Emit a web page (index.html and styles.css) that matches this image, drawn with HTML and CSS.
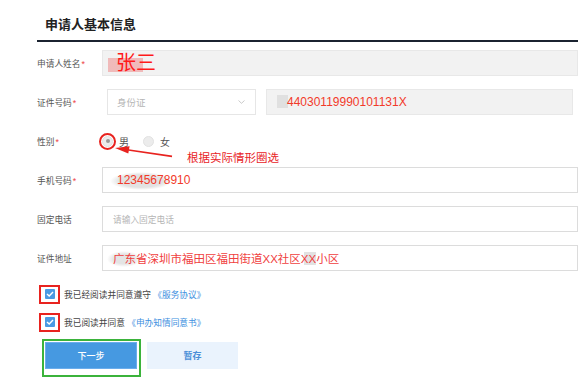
FILE: index.html
```html
<!DOCTYPE html>
<html lang="zh-CN">
<head>
<meta charset="utf-8">
<title>申请人基本信息</title>
<link rel="stylesheet" href="styles.css">
</head>
<body>
<div class="page">
  <div class="title-bar"><h2 class="title">申请人基本信息</h2></div>

  <div class="form">
    <div class="row">
      <div class="label">申请人姓名<span class="req">*</span></div>
      <div class="field field-gray field-name"><span class="v-name">张三</span></div>
    </div>

    <div class="row">
      <div class="label">证件号码<span class="req">*</span></div>
      <div class="select">
        <span class="placeholder">身份证</span>
        <svg class="chev" width="7" height="4" viewBox="0 0 7 4"><path d="M0.5 0.5 L3.5 3.3 L6.5 0.5" fill="none" stroke="#c4c4c4" stroke-width="0.9"/></svg>
      </div>
      <div class="field field-gray field-id"><span class="v-id">44030119990101131X</span></div>
    </div>

    <div class="row">
      <div class="label">性别<span class="req">*</span></div>
      <div class="radios">
        <span class="radio radio-on"><span class="ring"></span></span>
        <span class="radio-text">男</span>
        <span class="radio"></span>
        <span class="radio-text">女</span>
      </div>
    </div>

    <div class="row">
      <div class="label">手机号码<span class="req">*</span></div>
      <div class="field field-phone"><span class="v-phone">12345678910</span></div>
    </div>

    <div class="row">
      <div class="label">固定电话</div>
      <div class="field field-tel"><span class="placeholder">请输入固定电话</span></div>
    </div>

    <div class="row">
      <div class="label">证件地址</div>
      <div class="field field-addr"><span class="v-addr">广东省深圳市福田区福田街道XX社区XX小区</span></div>
    </div>
  </div>

  <div class="agree">
    <div class="agree-row">
      <span class="mark-red"><span class="checkbox"><svg width="8" height="6" viewBox="0 0 8 6"><path d="M1 3 L3.2 5 L7 1" fill="none" stroke="#fff" stroke-width="1.4"/></svg></span></span>
      <span class="agree-text">我已经阅读并同意遵守 <span class="link">《服务协议》</span></span>
    </div>
    <div class="agree-row">
      <span class="mark-red"><span class="checkbox"><svg width="8" height="6" viewBox="0 0 8 6"><path d="M1 3 L3.2 5 L7 1" fill="none" stroke="#fff" stroke-width="1.4"/></svg></span></span>
      <span class="agree-text">我已阅读并同意 <span class="link">《申办知情同意书》</span></span>
    </div>
  </div>

  <div class="actions">
    <div class="mark-green"><button class="btn btn-primary">下一步</button></div>
    <button class="btn btn-light">暂存</button>
  </div>

  <svg class="arrow" width="64" height="16" viewBox="0 0 64 16">
    <polygon points="3,5 17.6,3.3 16.3,10.6" fill="#e8231f"/>
    <line x1="16.5" y1="7" x2="60" y2="13.4" stroke="#e8231f" stroke-width="1.7"/>
  </svg>
  <div class="note">根据实际情形圈选</div>
</div>
</body>
</html>
```

FILE: styles.css
```css
html, body {
  margin: 0;
  padding: 0;
  background: #fff;
}

body {
  font-family: "Liberation Sans", "Noto Sans CJK SC", sans-serif;
  color: #555;
}

.page {
  position: relative;
  width: 541px;
  padding-left: 37px;
}

.title-bar {
  padding: 16px 0 6px 8px;
  border-bottom: 2px solid #1b2330;
}

.title {
  margin: 0;
  font-size: 13px;
  line-height: 18px;
  font-weight: bold;
  color: #222;
}

.form {
  margin-top: 8px;
  display: flex;
  flex-direction: column;
  gap: 13px;
}

.row {
  display: flex;
  align-items: center;
  height: 26px;
}

.label {
  width: 65px;
  flex: none;
  font-size: 8.7px;
  color: #555;
}

.req {
  color: #e44;
  margin-left: 1px;
}

.field {
  box-sizing: border-box;
  height: 26px;
  display: flex;
  align-items: center;
  border: 1px solid #dcdcdc;
  background: #fff;
  flex: 1;
}

.field-gray {
  background-color: #f2f2f2;
  border-color: #e8e8e8;
}

.field-name {
  padding-left: 13px;
  background-image: linear-gradient(rgba(238, 130, 130, 0.5), rgba(238, 130, 130, 0.5));
  background-repeat: no-repeat;
  background-position: 5px 7px;
  background-size: 35px 14px;
}

.v-name {
  font-size: 20px;
  line-height: 22px;
  color: #ff1a1a;
}

.select {
  box-sizing: border-box;
  margin-left: 5px;
  width: 149px;
  height: 26px;
  border: 1px solid #e6e6e6;
  display: flex;
  align-items: center;
  justify-content: space-between;
  padding: 0 10px 0 9px;
  flex: none;
}

.placeholder {
  font-size: 8.7px;
  color: #b5b5b5;
}

.select .placeholder {
  font-size: 9.5px;
}

.field-id {
  flex: none;
  width: 307px;
  margin-left: 10px;
  padding-left: 20px;
  background-image: linear-gradient(#e0e0e0, #e0e0e0);
  background-repeat: no-repeat;
  background-position: 10px 5px;
  background-size: 11px 13px;
}

.v-id {
  font-size: 12px;
  color: #f23a2a;
}

.radios {
  display: flex;
  align-items: center;
}

.radio {
  position: relative;
  box-sizing: border-box;
  width: 11px;
  height: 11px;
  border-radius: 50%;
  background: #ececec;
  border: 1px solid #e2e2e2;
  flex: none;
}

.radio-on::after {
  content: "";
  position: absolute;
  left: 2.5px;
  top: 2.5px;
  width: 4px;
  height: 4px;
  border-radius: 50%;
  background: #9a9a9a;
}

.ring {
  position: absolute;
  left: -4px;
  top: -4px;
  width: 17px;
  height: 17px;
  box-sizing: border-box;
  border: 2px solid #e8231f;
  border-radius: 50%;
}

.radio-text {
  font-size: 10px;
  color: #555;
  margin-left: 6px;
  margin-right: 14px;
}

.field-phone {
  padding-left: 14px;
  background-image: radial-gradient(closest-side, #e2e2e2 70%, rgba(226, 226, 226, 0));
  background-repeat: no-repeat;
  background-position: 7px 4px;
  background-size: 62px 18px;
}

.v-phone {
  font-size: 12px;
  color: #f23a2a;
}

.field-tel {
  padding-left: 10px;
}

.field-addr {
  padding-left: 10px;
  background-image:
    radial-gradient(closest-side, #e4e4e4 60%, rgba(228, 228, 228, 0)),
    linear-gradient(#e2e2e2, #e2e2e2);
  background-repeat: no-repeat;
  background-position: 4px 5px, 201px 6px;
  background-size: 34px 16px, 12px 13px;
}

.v-addr {
  font-size: 11.5px;
  color: #f04040;
}

.agree {
  margin-top: 13px;
  display: flex;
  flex-direction: column;
  gap: 8px;
}

.agree-row {
  display: flex;
  align-items: center;
  height: 20px;
  margin-left: 2px;
}

.mark-red {
  box-sizing: border-box;
  width: 21px;
  height: 19px;
  border: 2px solid #e8231f;
  display: flex;
  align-items: center;
  justify-content: center;
  flex: none;
}

.checkbox {
  width: 10px;
  height: 10px;
  border-radius: 1px;
  background: #4a9be3;
  display: flex;
  align-items: center;
  justify-content: center;
}

.agree-text {
  margin-left: 4px;
  font-size: 8.7px;
  color: #444;
}

.link {
  color: #3d8fe0;
}

.actions {
  margin-top: 7px;
  margin-left: 5px;
  display: flex;
  align-items: flex-start;
}

.mark-green {
  box-sizing: border-box;
  width: 99px;
  height: 38px;
  border: 2px solid #3bb33b;
  padding: 1px 2px 6px 1px;
}

.btn {
  box-sizing: border-box;
  height: 27px;
  border: none;
  font-family: "Liberation Sans", "Noto Sans CJK SC", sans-serif;
  font-size: 9px;
  padding: 0;
  cursor: pointer;
}

.btn-primary {
  width: 92px;
  background: #4699e1;
  border: 1px solid #6aadec;
  color: #fff;
  font-weight: 500;
}

.btn-light {
  margin-left: 6px;
  margin-top: 3px;
  width: 91px;
  background: #eaf3fd;
  color: #4a8fd8;
  font-weight: bold;
}

.arrow {
  position: absolute;
  left: 112px;
  top: 143px;
}

.note {
  position: absolute;
  left: 187px;
  top: 151px;
  font-size: 11.5px;
  line-height: 14px;
  color: #e8231f;
  white-space: nowrap;
}
```
